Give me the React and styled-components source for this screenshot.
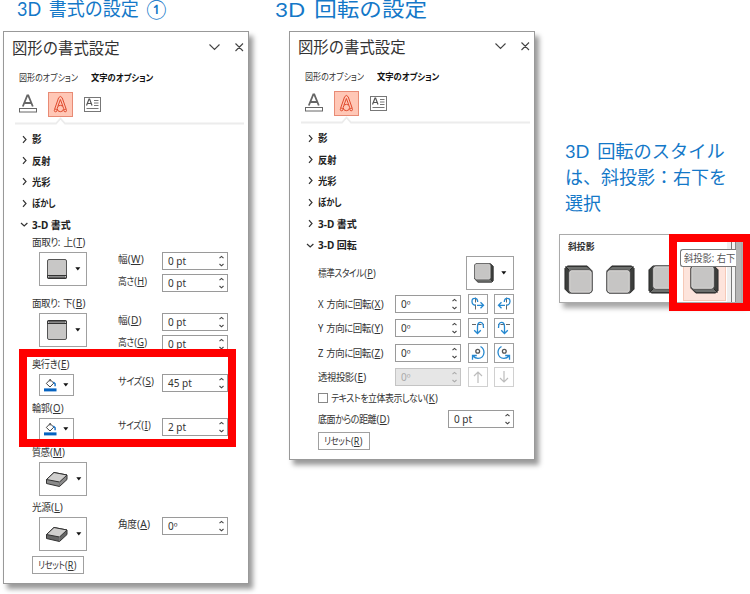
import React, { useLayoutEffect, useRef, useState } from "react";
import styled, { createGlobalStyle } from "styled-components";

const Fit = ({ w, children }) => {
  const ref = useRef(null);
  const [scale, setScale] = useState(1);

  useLayoutEffect(() => {
    setScale(w / ref.current.offsetWidth);
  }, [w]);

  return (
    <FitBox $w={w}>
      <FitText ref={ref} style={{ transform: `scaleX(${scale})` }}>{children}</FitText>
    </FitBox>
  );
};

const KeyLabel = ({ w, text, hot }) => (
  <Fit w={w}><Narrow>{text}</Narrow><Hot>(<u>{hot}</u>)</Hot></Fit>
);

const Chevron = ({ open }) => (
  <svg width="9" height="9" viewBox="0 0 9 9" fill="none" stroke="#333" strokeWidth="1.2">
    <path d={open ? "M1 3l3.2 3L7.4 3" : "M3 1.2l3 3.3l-3 3.3"} />
  </svg>
);

const Spinner = ({ value, disabled }) => (
  <SpinBox $disabled={disabled}>
    <span>{value}</span>
    <svg width="7" height="14" viewBox="0 0 7 14" fill="none" stroke={disabled ? "#aaa" : "#444"} strokeWidth="1.1">
      <path d="M1.5 4.2l2-1.8l2 1.8M1.5 10l2 1.8l2-1.8" />
    </svg>
  </SpinBox>
);

const Caret = () => (
  <svg width="6" height="4" viewBox="0 0 6 4"><path d="M0.3 0.3h5L2.8 3.5z" fill="#111" /></svg>
);

const BevelIcon = ({ flip }) => (
  <svg width="22" height="22" viewBox="0 0 22 22">
    <g transform={flip ? "matrix(1 0 0 -1 0 22)" : undefined}>
      <rect x="1.5" y="1.5" width="19" height="19" rx="1.5" fill="#c8c7c6" stroke="#555" />
      <path d="M1.5 17.5h19v2q0 1-1 1h-17q-1 0-1-1z" fill="#444" stroke="#333" />
      <path d="M4 18.8h14" stroke="#aaa" />
      <path d="M2 18.8h1.5M18.5 18.8h1.5" stroke="#fff" />
    </g>
  </svg>
);

const SlabIcon = ({ dark }) => (
  <svg width="24" height="17" viewBox="0 0 24 17" stroke="#333" strokeLinejoin="round">
    <path d="M1.5 8.5L9 1.5l13 2.5v4.5L14.5 15.5L1.5 12.5z" fill={dark ? "#666" : "#8a8a8a"} />
    <path d="M1.5 8.5L9 1.5L22 4l-7.5 7z" fill="#d0cfce" />
    <path d="M14.5 11v4" fill="none" stroke="#777" />
  </svg>
);

const BucketIcon = () => (
  <svg width="13" height="14" viewBox="0 0 13 14" fill="none">
    <path d="M2.3 5.5L6 1.6l3.8 3.5L6 9z" stroke="#444" fill="#fff" strokeLinejoin="round" />
    <path d="M6 1v2.5" stroke="#444" />
    <path d="M9.3 4l1.8 1.8v2.5" stroke="#1c74c8" strokeWidth="1.5" />
    <rect x="0" y="10.4" width="12.5" height="3" fill="#0563c1" />
  </svg>
);

const CUBE_FLIPS = {
  topLeft: "matrix(-1 0 0 -1 30 30)",
  topRight: "matrix(1 0 0 -1 0 30)",
  bottomLeft: "matrix(-1 0 0 1 30 0)",
  bottomRight: "matrix(1 0 0 1 0 0)",
};

const Cube = ({ depth = "bottomRight", size = 30 }) => (
  <svg width={size} height={size} viewBox="0 0 30 30">
    <g transform={CUBE_FLIPS[depth]} strokeLinejoin="round">
      <path d="M1 3L3 1H25L29 5V26.5L26.5 29H6L1 24z" fill="#3c3e3c" stroke="#2b2b2b" />
      <path d="M2 24.5h22.5l3 3.5H6.5z" fill="#6d6f6d" />
      <path d="M24.5 24.5l4 4" stroke="#252525" />
      <rect x="1" y="1" width="24" height="24" rx="3" fill="#c6c5c4" stroke="#4a4a4a" />
      <rect x="2" y="2" width="22" height="22" rx="2.2" fill="none" stroke="#dad9d8" strokeWidth="0.8" />
    </g>
  </svg>
);

// Arrows of the rotate buttons, drawn on a 16px grid
const ROTATE = {
  x: (
    <>
      <path d="M5.5 1.5v13" stroke="#666" strokeWidth="1" strokeDasharray="5 2" />
      <path d="M5.5 9.3Q2 8.8 2 5.5T4.8 2.3Q7.7 2.3 7.7 6M7 9.3h6.5M10.5 6.3l3 3l-3 3" />
    </>
  ),
  y: (
    <>
      <path d="M2 4.5h12" stroke="#666" strokeWidth="1" strokeDasharray="4 1.5" />
      <path d="M13.5 8Q13.5 2.3 10.5 2.3T7.5 7v6.5M4.2 10.2l3.3 3.3l3.3-3.3" />
    </>
  ),
  z: (
    <>
      <circle cx="7.7" cy="6.2" r="1.9" stroke="#555" />
      <path d="M10.5 1.5Q14 3.5 14 7.5Q13.5 13.3 8 13.3Q5 13.3 3 11M2.5 14.8v-4.3h4.3" />
    </>
  ),
};

const RotateIcon = ({ axis, mirror }) => (
  <svg width="16" height="16" viewBox="0 0 16 16" fill="none" stroke="#2588d0" strokeWidth="1.3">
    <g transform={mirror ? "matrix(-1 0 0 1 16 0)" : undefined}>{ROTATE[axis]}</g>
  </svg>
);

const ArrowIcon = ({ down }) => (
  <svg width="12" height="14" viewBox="0 0 12 14" fill="none" stroke="#bdbdbd" strokeWidth="1.2">
    <path d={down ? "M6 1v11M2 8l4 4l4-4" : "M6 13V2M2 6l4-4l4 4"} />
  </svg>
);

const PanelTop = () => (
  <>
    <Header>
      <Title><Fit w={108}>図形の書式設定</Fit></Title>
      <svg width="36" height="12" viewBox="0 0 36 12" fill="none" stroke="#444" strokeWidth="1.1">
        <path d="M1.5 3.5l5 5l5-5M27.5 2.5l7.5 7.5M35 2.5L27.5 10" />
      </svg>
    </Header>
    <Tabs>
      <Fit w={59}>図形のオプション</Fit>
      <b><Fit w={62}>文字のオプション</Fit></b>
    </Tabs>
    <IconTabs>
      <svg width="20" height="20" viewBox="0 0 20 20" fill="none" stroke="#666">
        <path d="M4.8 12.5L9.3 1.5h1l4.5 11M6.5 9h6.7" strokeWidth="1.8" />
        <rect x="1.5" y="14.5" width="17" height="3.5" />
      </svg>
      <ActiveTab>
        <svg width="15" height="19" viewBox="0 0 15 19" fill="none" stroke="#e0492c">
          <path d="M1.5 14.5L5.6 2.8Q7.4 0 9.2 2.8L13.3 14.5M5 11L7.4 4.5L9.8 11" />
          <circle cx="7.4" cy="13.5" r="3.2" />
          <circle cx="2.6" cy="15.5" r="1.3" fill="#ffc7b6" />
          <circle cx="12.2" cy="15.5" r="1.3" fill="#ffc7b6" />
        </svg>
      </ActiveTab>
      <svg width="19" height="17" viewBox="0 0 19 17" fill="none" stroke="#777">
        <rect x="1.5" y="1.5" width="16" height="14" />
        <path d="M3.5 9.5L6 3h0.6L9 9.5M4.3 7.5h4" stroke="#555" strokeWidth="1.2" />
        <path d="M11 4.5h4.5M11 7h4.5M11 9.5h4.5M3.5 12.5h12" />
      </svg>
    </IconTabs>
    <svg width="229" height="8" viewBox="0 0 229 8" fill="none" stroke="#ececec" strokeWidth="1.8">
      <path d="M0 6.5h41l4.5-5l4.5 5h179" />
    </svg>
  </>
);

const Sections = ({ closed, open }) => (
  <SectionList>
    {closed.map(([name, w]) => (
      <SectionRow key={name}><Chevron /><Fit w={w}>{name}</Fit></SectionRow>
    ))}
    <SectionRow><Chevron open /><Fit w={39}>{open}</Fit></SectionRow>
  </SectionList>
);

const effects = [["影", 9.5], ["反射", 18.5], ["光彩", 18.5], ["ぼかし", 24]];

const FormatPanel = () => (
  <Panel $h={553}>
    <PanelTop />
    <Sections closed={effects} open="3-D 書式" />
    <Group $h={61}>
      <KeyLabel w={54} text="面取り: 上" hot="T" />
      <GroupBody>
        <Drop><BevelIcon /><Caret /></Drop>
        <Fields>
          <Field><KeyLabel w={26} text="幅" hot="W" /><Spinner value="0 pt" /></Field>
          <Field><KeyLabel w={29} text="高さ" hot="H" /><Spinner value="0 pt" /></Field>
        </Fields>
      </GroupBody>
    </Group>
    <Group $h={61}>
      <KeyLabel w={54} text="面取り: 下" hot="B" />
      <GroupBody>
        <Drop><BevelIcon flip /><Caret /></Drop>
        <Fields>
          <Field><KeyLabel w={24} text="幅" hot="D" /><Spinner value="0 pt" /></Field>
          <Field><KeyLabel w={29} text="高さ" hot="G" /><Spinner value="0 pt" /></Field>
        </Fields>
      </GroupBody>
    </Group>
    <Group $h={44}>
      <KeyLabel w={38} text="奥行き" hot="E" />
      <GroupBody>
        <Drop $small><BucketIcon /><Caret /></Drop>
        <Fields>
          <Field><KeyLabel w={36} text="サイズ" hot="S" /><Spinner value="45 pt" /></Field>
        </Fields>
      </GroupBody>
    </Group>
    <Group $h={44}>
      <KeyLabel w={32} text="輪郭" hot="O" />
      <GroupBody>
        <Drop $small><BucketIcon /><Caret /></Drop>
        <Fields>
          <Field><KeyLabel w={33} text="サイズ" hot="I" /><Spinner value="2 pt" /></Field>
        </Fields>
      </GroupBody>
    </Group>
    <Group $h={55}>
      <KeyLabel w={33} text="質感" hot="M" />
      <GroupBody><Drop><SlabIcon /><Caret /></Drop></GroupBody>
    </Group>
    <Group $h={56}>
      <KeyLabel w={31} text="光源" hot="L" />
      <GroupBody>
        <Drop><SlabIcon dark /><Caret /></Drop>
        <Fields>
          <Field><KeyLabel w={32} text="角度" hot="A" /><Spinner value="0º" /></Field>
        </Fields>
      </GroupBody>
    </Group>
    <Reset><KeyLabel w={39} text="リセット" hot="R" /></Reset>
    <DepthMark />
  </Panel>
);

const RotationPanel = () => (
  <Panel $h={429} $lift>
    <PanelTop />
    <Sections closed={[...effects, ["3-D 書式", 39]]} open="3-D 回転" />
    <Row $h={34} $after={2}>
      <KeyLabel w={58} text="標準スタイル" hot="P" />
      <Drop><Cube size={20} /><Caret /></Drop>
    </Row>
    {["X", "Y", "Z"].map((axis) => (
      <Row key={axis} $h={24.3}>
        <KeyLabel w={66} text={`${axis} 方向に回転`} hot={axis} />
        <Controls>
          <Spinner value="0º" />
          <Square><RotateIcon axis={axis.toLowerCase()} /></Square>
          <Square><RotateIcon axis={axis.toLowerCase()} mirror /></Square>
        </Controls>
      </Row>
    ))}
    <Row $h={24.3}>
      <KeyLabel w={49} text="透視投影" hot="E" />
      <Controls>
        <Spinner value="0º" disabled />
        <Square $disabled><ArrowIcon /></Square>
        <Square $disabled><ArrowIcon down /></Square>
      </Controls>
    </Row>
    <CheckRow>
      <CheckBox />
      <KeyLabel w={107} text="テキストを立体表示しない" hot="K" />
    </CheckRow>
    <Row $h={26}>
      <KeyLabel w={72} text="底面からの距離" hot="D" />
      <Spinner value="0 pt" />
    </Row>
    <Reset><KeyLabel w={39} text="リセット" hot="R" /></Reset>
  </Panel>
);

const StyleGallery = () => (
  <GalleryWrap>
    <Gallery>
      <GalleryTitle><Fit w={27}>斜投影</Fit></GalleryTitle>
      <Cubes>
        <CubeCell><Cube size={29} depth="topLeft" /></CubeCell>
        <CubeCell><Cube size={29} depth="topRight" /></CubeCell>
        <CubeCell><Cube size={29} depth="bottomLeft" /></CubeCell>
        <CubeCell $selected><Cube size={29} depth="bottomRight" /></CubeCell>
      </Cubes>
      <ScrollTrack />
    </Gallery>
    <Tooltip><Fit w={51}>斜投影: 右下</Fit></Tooltip>
    <StyleMark />
  </GalleryWrap>
);

const App = () => (
  <Page>
    <GlobalStyle />
    <Column $w={286}>
      <Heading><Fit w={149}>3D 書式の設定 ①</Fit></Heading>
      <FormatPanel />
    </Column>
    <Column $w={270}>
      <Heading $out><Fit w={152}>3D 回転の設定</Fit></Heading>
      <RotationPanel />
    </Column>
    <SideColumn>
      <Note>
        <Fit w={160}>3D 回転のスタイル</Fit>
        <Fit w={162}>は、斜投影：右下を</Fit>
        <Fit w={36}>選択</Fit>
      </Note>
      <StyleGallery />
    </SideColumn>
  </Page>
);

export default App;

const GlobalStyle = createGlobalStyle`
  * {
    box-sizing: border-box;
  }
  body {
    margin: 0;
    background: #fff;
    overflow: hidden;
  }
  svg {
    display: block;
    flex: none;
  }
`;

const FitBox = styled.span`
  display: block;
  flex: none;
  width: ${(p) => p.$w}px;
  white-space: nowrap;
`;

const FitText = styled.span`
  display: inline-block;
  transform-origin: left center;
  u {
    text-underline-offset: 1px;
  }
`;

const Narrow = styled.span`
  letter-spacing: -0.5px;
  word-spacing: 1.5px;
`;

const Hot = styled.span`
  margin-left: 0.5px;
  font-size: 10.5px;
  letter-spacing: 0.3px;
`;

const Page = styled.main`
  display: flex;
  width: 750px;
  height: 594px;
  padding-left: 3px;
  overflow: hidden;
  font-family: "Noto Sans", "Noto Sans CJK JP", sans-serif;
  font-feature-settings: "palt";
  color: #333;
`;

const Column = styled.div`
  width: ${(p) => p.$w}px;
  flex: none;
`;

const Heading = styled.h2`
  margin: 0 0 0 ${(p) => (p.$out ? -14 : 14)}px;
  height: 30.5px;
  font-family: Lato, "Noto Sans CJK JP", sans-serif;
  font-feature-settings: normal;
  font-size: ${(p) => (p.$out ? 20 : 19)}px;
  line-height: 18px;
  font-weight: 400;
  word-spacing: 3px;
  color: #1478c8;
`;

const Panel = styled.section`
  position: relative;
  width: 246px;
  height: ${(p) => p.$h}px;
  padding: ${(p) => (p.$lift ? 2 : 3)}px 4px 0 11px;
  border: 1px solid #999;
  background: #fff;
  box-shadow: 4px 5px 5px rgba(0, 0, 0, 0.4);
  font-size: 10px;
  line-height: 14px;
`;

const Header = styled.header`
  display: flex;
  justify-content: space-between;
  align-items: center;
  height: 25px;
  margin-left: -3px;
`;

const Title = styled.div`
  font-family: "Noto Sans CJK JP", sans-serif;
  font-feature-settings: normal;
  font-size: 15.5px;
  line-height: 24px;
  font-weight: 400;
  color: #333;
`;

const Tabs = styled.nav`
  display: flex;
  gap: 13px;
  height: 32px;
  padding: 11px 0 0 4px;
  font-size: 9.5px;

  b {
    color: #111;
  }
`;

const IconTabs = styled.div`
  display: flex;
  align-items: center;
  height: 25px;
  padding-left: 3px;
  gap: 10px;
`;

const ActiveTab = styled.div`
  display: grid;
  place-items: center;
  width: 25px;
  height: 25px;
  border: 1px solid #e88b75;
  background: #ffc7b6;
`;

const SectionList = styled.div`
  padding: 4px 0 0 5px;
  font-weight: 700;
  color: #222;
`;

const SectionRow = styled.div`
  display: flex;
  align-items: center;
  gap: 3px;
  height: 21.4px;
`;

const Group = styled.div`
  height: ${(p) => p.$h}px;
  margin-left: 17px;
`;

const GroupBody = styled.div`
  display: flex;
  align-items: flex-start;
  justify-content: space-between;
  margin: 3px 16px 0 7px;
`;

const Drop = styled.button`
  display: flex;
  align-items: center;
  justify-content: center;
  gap: ${(p) => (p.$small ? 6 : 7)}px;
  width: ${(p) => (p.$small ? 35 : 48)}px;
  height: ${(p) => (p.$small ? 22 : 34)}px;
  padding: 0;
  flex: none;
  border: 1px solid #a0a0a0;
  background: #fff;
`;

const Fields = styled.div`
  display: flex;
  flex-direction: column;
  gap: 4px;
  width: 110px;
`;

const Field = styled.div`
  display: flex;
  justify-content: space-between;
  height: 18px;
`;

const SpinBox = styled.div`
  display: flex;
  align-items: center;
  justify-content: space-between;
  width: 66px;
  height: 18px;
  padding: 0 2px 0 5px;
  border: 1px solid ${(p) => (p.$disabled ? "#c4c4c4" : "#9a9a9a")};
  background: ${(p) => (p.$disabled ? "#e6e6e6" : "#fff")};
  color: ${(p) => (p.$disabled ? "#aaa" : "#333")};
`;

const Reset = styled.button`
  display: grid;
  place-items: center;
  width: 52px;
  height: 18px;
  margin-left: 16.5px;
  padding: 0;
  border: 1px solid #a0a0a0;
  background: #fff;
  color: #333;
  font: inherit;
  line-height: 14px;
`;

const Row = styled.div`
  display: flex;
  align-items: center;
  justify-content: space-between;
  height: ${(p) => p.$h}px;
  margin: 0 16px ${(p) => p.$after || 0}px 17px;
`;

const Controls = styled.div`
  display: flex;
  align-items: center;
  gap: 6px;

  ${SpinBox} {
    margin-right: 1px;
  }
`;

const Square = styled.button`
  display: grid;
  place-items: center;
  width: 20px;
  height: 20px;
  padding: 0;
  border: 1px solid ${(p) => (p.$disabled ? "#d0d0d0" : "#a0a0a0")};
  background: #fff;
`;

const CheckRow = styled.div`
  display: flex;
  align-items: center;
  gap: 3px;
  height: 17px;
  margin-left: 17px;
`;

const CheckBox = styled.span`
  width: 10px;
  height: 10px;
  border: 1px solid #888;
`;

const DepthMark = styled.div`
  position: absolute;
  left: 15px;
  top: 317.5px;
  width: 217px;
  height: 98px;
  border: 8.5px solid #f00;
`;

const SideColumn = styled.aside`
  flex: none;
  width: 191px;
  padding-top: 138px;
`;

const Note = styled.div`
  height: 96px;
  padding-left: 6px;
  font-family: Lato, "Noto Sans CJK JP", sans-serif;
  font-feature-settings: normal;
  font-size: 18px;
  line-height: 26px;
  font-weight: 400;
  word-spacing: 3px;
  color: #1478c8;
`;

const GalleryWrap = styled.div`
  position: relative;
  height: 80px;
`;

const Gallery = styled.div`
  position: relative;
  width: 183px;
  height: 69px;
  border: 1px solid #aaa;
  background: #fff;
  box-shadow: 4px 5px 5px rgba(0, 0, 0, 0.35);
`;

const GalleryTitle = styled.div`
  height: 17px;
  padding: 5px 0 0 8px;
  font-size: 9.5px;
  line-height: 14px;
  font-weight: 700;
`;

const Cubes = styled.div`
  display: flex;
`;

const CubeCell = styled.div`
  width: ${(p) => (p.$selected ? 43 : 42)}px;
  height: 49px;
  padding: ${(p) => (p.$selected ? "12px 6px" : "13px 4px")};
  border: ${(p) => (p.$selected ? "1px solid #f6c9b8" : "none")};
  margin-left: ${(p) => (p.$selected ? -3 : 0)}px;
  background: ${(p) => (p.$selected ? "#fde4dc" : "none")};
`;

const ScrollTrack = styled.div`
  position: absolute;
  top: 0;
  right: 0;
  width: 14px;
  height: 67px;
  background: linear-gradient(90deg, #eee 0 4px, #777 4px 5px, #f3f3f3 5px 8px, #888 8px 9px, #b5b5b5 9px);
`;

const Tooltip = styled.div`
  position: absolute;
  left: 121px;
  top: 15px;
  width: 56px;
  height: 18px;
  padding: 1px 0 0 3px;
  border: 1px solid #777;
  border-right: none;
  border-radius: 3px 0 0 3px;
  background: #fff;
  font-size: 10px;
  line-height: 14px;
  color: #555;
`;

const StyleMark = styled.div`
  position: absolute;
  left: 110px;
  top: 0;
  width: 82px;
  height: 77px;
  border: 8.5px solid #f00;
`;
